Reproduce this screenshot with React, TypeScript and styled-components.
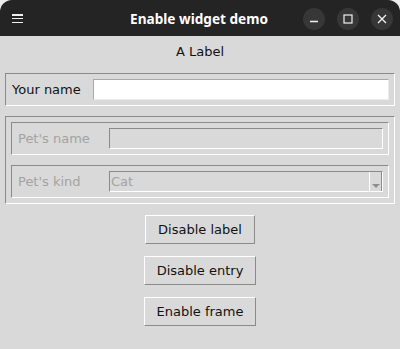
import React from 'react';
import styled, { createGlobalStyle } from 'styled-components';

const GlobalStyle = createGlobalStyle`
  html, body {
    margin: 0;
    padding: 0;
    background: #ececec;
  }
  body {
    font-family: "DejaVu Sans", "Liberation Sans", sans-serif;
  }
`;

const Window = styled.div`
  width: 400px;
  height: 349px;
  background: #d9d9d9;
  border-radius: 12px 12px 0 0;
  overflow: hidden;
  display: flex;
  flex-direction: column;
`;

const TitleBar = styled.div`
  height: 36px;
  background: #242424;
  display: flex;
  align-items: center;
  padding: 0 7px 0 12px;
  flex-shrink: 0;
`;

const Title = styled.div`
  flex: 1;
  text-align: center;
  color: #ffffff;
  font-family: "Noto Sans", "DejaVu Sans", sans-serif;
  font-weight: 700;
  font-size: 13.6px;
  padding-left: 72px;
`;

const MenuIcon = styled.div`
  width: 11px;
  height: 9px;
  display: flex;
  flex-direction: column;
  justify-content: space-between;
  margin-top: 1px;

  span {
    display: block;
    height: 1.5px;
    background: #f0f0f0;
  }
`;

const Controls = styled.div`
  display: flex;
  gap: 12px;
  margin-top: 1px;
`;

const CircleButton = styled.div`
  width: 22px;
  height: 22px;
  border-radius: 50%;
  background: #373737;
  display: flex;
  align-items: center;
  justify-content: center;
`;

const Body = styled.div`
  display: flex;
  flex-direction: column;
  padding: 0 5px;
`;

const TopLabel = styled.div`
  height: 30px;
  display: flex;
  align-items: center;
  justify-content: center;
  font-size: 13px;
  color: #111;
  margin-bottom: 7px;
`;

const Group = styled.div<{ $cols?: string }>`
  border: 1px solid;
  border-color: #8a8a8a #ffffff #ffffff #8a8a8a;
  padding: 5px;
  display: grid;
  grid-template-columns: ${(p) => p.$cols || '1fr'};
  align-items: center;
`;

const Stack = styled.div<{ $top?: number }>`
  display: flex;
  flex-direction: column;
  gap: 10px;
  margin-top: ${(p) => p.$top ?? 0}px;
`;

const FieldLabel = styled.div<{ $disabled?: boolean }>`
  font-size: 13px;
  padding-left: 1px;
  color: ${(p) => (p.$disabled ? '#a3a3a3' : '#111')};
  white-space: nowrap;
`;

const Entry = styled.div<{ $disabled?: boolean }>`
  height: 21px;
  box-sizing: border-box;
  border: 1px solid;
  border-color: ${(p) =>
    p.$disabled ? '#8a8a8a #ffffff #ffffff #8a8a8a' : '#a8a8a8 #ececec #ececec #a8a8a8'};
  background: ${(p) => (p.$disabled ? '#d9d9d9' : '#ffffff')};
`;

const Combo = styled.div`
  height: 21px;
  box-sizing: border-box;
  border: 1px solid;
  border-color: #8a8a8a #ffffff #ffffff #8a8a8a;
  display: flex;
  align-items: stretch;
  font-size: 13px;
  color: #a3a3a3;
`;

const ComboText = styled.div`
  flex: 1;
  display: flex;
  align-items: center;
  padding-left: 1px;
`;

const ComboArrow = styled.div`
  width: 11px;
  border-left: 1px solid #ffffff;
  border-right: 1px solid #8a8a8a;
  display: flex;
  align-items: flex-end;
  justify-content: center;
  padding-bottom: 3px;
  box-sizing: content-box;

  &::after {
    content: '';
    border-left: 4px solid transparent;
    border-right: 4px solid transparent;
    border-top: 4px solid #8f8f8f;
  }
`;

const Buttons = styled.div`
  display: flex;
  flex-direction: column;
  align-items: center;
  gap: 12px;
  margin-top: 11px;
`;

const Button = styled.div`
  font-size: 13px;
  color: #111;
  height: 29px;
  box-sizing: border-box;
  padding: 0 12px;
  display: flex;
  align-items: center;
  border: 1px solid;
  border-color: #ffffff #8a8a8a #8a8a8a #ffffff;
  background: #d9d9d9;
`;

export default function App() {
  return (
    <>
      <GlobalStyle />
      <Window>
        <TitleBar>
          <MenuIcon>
            <span />
            <span />
            <span />
          </MenuIcon>
          <Title>Enable widget demo</Title>
          <Controls>
            <CircleButton>
              <svg width="10" height="10" viewBox="0 0 10 10">
                <line x1="1" y1="7.5" x2="9" y2="7.5" stroke="#f2f2f2" strokeWidth="1.3" />
              </svg>
            </CircleButton>
            <CircleButton>
              <svg width="10" height="10" viewBox="0 0 10 10">
                <rect x="1" y="1" width="8" height="8" fill="none" stroke="#f2f2f2" strokeWidth="1.2" />
              </svg>
            </CircleButton>
            <CircleButton>
              <svg width="10" height="10" viewBox="0 0 10 10">
                <path d="M1 1 L9 9 M9 1 L1 9" stroke="#f2f2f2" strokeWidth="1.3" />
              </svg>
            </CircleButton>
          </Controls>
        </TitleBar>
        <Body>
          <TopLabel>A Label</TopLabel>
          <Group $cols="82px 1fr">
            <FieldLabel>Your name</FieldLabel>
            <Entry />
          </Group>
          <Stack $top={10}>
            <Group>
              <Stack>
                <Group $cols="92px 1fr">
                  <FieldLabel $disabled>Pet's name</FieldLabel>
                  <Entry $disabled />
                </Group>
                <Group $cols="92px 1fr">
                  <FieldLabel $disabled>Pet's kind</FieldLabel>
                  <Combo>
                    <ComboText>Cat</ComboText>
                    <ComboArrow />
                  </Combo>
                </Group>
              </Stack>
            </Group>
          </Stack>
          <Buttons>
            <Button>Disable label</Button>
            <Button>Disable entry</Button>
            <Button>Enable frame</Button>
          </Buttons>
        </Body>
      </Window>
    </>
  );
}
